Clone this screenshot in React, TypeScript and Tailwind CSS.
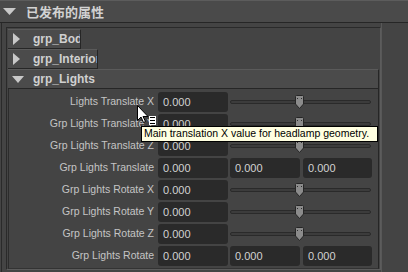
const rows = [
  { label: "Lights Translate X", kind: "slider" },
  { label: "Grp Lights Translate Y", kind: "slider" },
  { label: "Grp Lights Translate Z", kind: "slider" },
  { label: "Grp Lights Translate", kind: "triple" },
  { label: "Grp Lights Rotate X", kind: "slider" },
  { label: "Grp Lights Rotate Y", kind: "slider" },
  { label: "Grp Lights Rotate Z", kind: "slider" },
  { label: "Grp Lights Rotate", kind: "triple" },
]

const Field = ({ w }: { w: string }) => (
  <div className={`${w} h-[20px] rounded-[3px] bg-[#2a2a2a] pl-[5px] flex items-center text-[#d2d2d2]`}>0.000</div>
)

const Slider = () => (
  <div className="relative w-[141px] h-[20px] ml-[2px] flex items-center">
    <div className="w-full h-[4px] rounded-[2px] border border-[#2a2a2a] bg-[#3c3c3c]" />
    <svg className="absolute left-[64px] top-[2px]" width="11" height="16" viewBox="0 0 11 16">
      <path d="M1.5 2.5 Q1.5 1.5 2.5 1.5 H8.5 Q9.5 1.5 9.5 2.5 V10 L5.5 14.5 L1.5 10 Z" fill="#8b8b8b" stroke="#262626" />
      <rect x="3" y="4" width="1" height="1" fill="#2e2e2e" />
      <rect x="7" y="4" width="1" height="1" fill="#2e2e2e" />
    </svg>
  </div>
)

const GroupHead = ({ name, open, w }: { name: string; open?: boolean; w: string }) => (
  <div className={`${w} h-[20px] flex items-center bg-[#4b4b4b] border-t border-[#5a5a5a] border-r border-b border-r-[#262626] border-b-[#262626] text-[#d0d0d0] font-bold text-[12px] overflow-hidden whitespace-nowrap`}>
    {open ? (
      <svg className="shrink-0 ml-[4px] mr-[9px]" width="12" height="7" viewBox="0 0 12 7"><path d="M0 0 H12 L6 7 Z" fill="#c8c8c8" /></svg>
    ) : (
      <svg className="shrink-0 ml-[5px] mr-[13px]" width="7" height="12" viewBox="0 0 7 12"><path d="M0 0 L7 6 L0 12 Z" fill="#c8c8c8" /></svg>
    )}
    <span>{name}</span>
  </div>
)

export default function App() {
  return (
    <div className="relative w-[408px] h-[272px] bg-[#444444] overflow-hidden text-[10.5px]" style={{ fontFamily: '"Liberation Sans", Arial, sans-serif' }}>
      <div className="h-[23px] bg-[#4a4a4a] border-t border-[#5c5c5c] border-b border-b-[#262626] flex items-center">
        <svg className="shrink-0 ml-[3px] mr-[10px]" width="13" height="7" viewBox="0 0 13 7"><path d="M0 0 H13 L6.5 7 Z" fill="#c8c8c8" /></svg>
        <span className="text-[13px] font-bold text-[#d2d2d2]" style={{ fontFamily: '"Noto Sans CJK SC", sans-serif' }}>已发布的属性</span>
      </div>

      <div className="flex pl-[1px]">
        <div className="w-[381px] h-[249px] border-l border-[#2a2a2a] border-r border-r-[#585858] pl-[4px] pt-[4px]">
          <div className="h-[243px] border-t border-l border-[#2a2a2a] border-r border-r-[#5c5c5c] border-b border-b-[#5c5c5c] pl-[1px] pt-[1px]">
            <GroupHead name="grp_Body" w="w-[73px]" />
            <GroupHead name="grp_Interior" w="w-[90px]" />
            <GroupHead name="grp_Lights" open w="w-[371px]" />
            <div className="w-[371px] border-l border-[#2c2c2c] border-r border-r-[#262626] border-b border-b-[#333] pt-[2px] pb-[1px]">
              {rows.map((r) => (
                <div key={r.label} className="h-[22px] flex items-center">
                  <div className="w-[146px] pr-[1px] text-right text-[#c4c4c4] whitespace-nowrap">{r.label}</div>
                  <div className="ml-[3px] flex items-center text-[11px]">
                    <Field w="w-[70px]" />
                    {r.kind === "slider" ? (
                      <Slider />
                    ) : (
                      <>
                        <div className="ml-[2px]"><Field w="w-[70px]" /></div>
                        <div className="ml-[3px]"><Field w="w-[69px]" /></div>
                      </>
                    )}
                  </div>
                </div>
              ))}
            </div>
          </div>
        </div>
      </div>

      {/* mouse cursor */}
      <svg className="absolute left-[137px] top-[105px]" width="13" height="19" viewBox="0 0 13 19">
        <path d="M0.5 0.5 V15.5 L4 12 L6.5 17.5 L8.5 16.5 L6 11.5 H11 Z" fill="#ffffff" stroke="#000000" strokeWidth="1" />
      </svg>
      <svg className="absolute left-[149px] top-[116px]" width="7" height="9" viewBox="0 0 7 9">
        <rect x="0" y="0" width="7" height="9" fill="#ffffff" />
        <rect x="1" y="1" width="5" height="1" fill="#000" />
        <rect x="1" y="4" width="5" height="1" fill="#000" />
        <rect x="1" y="7" width="5" height="1" fill="#000" />
      </svg>

      {/* tooltip */}
      <div className="absolute left-[141px] top-[126px] w-[237px] h-[16px] bg-[#ffffe1] border border-black pl-[2px] flex items-center text-[10.5px] text-black whitespace-nowrap overflow-hidden">
        Main translation X value for headlamp geometry.
      </div>
    </div>
  )
}
